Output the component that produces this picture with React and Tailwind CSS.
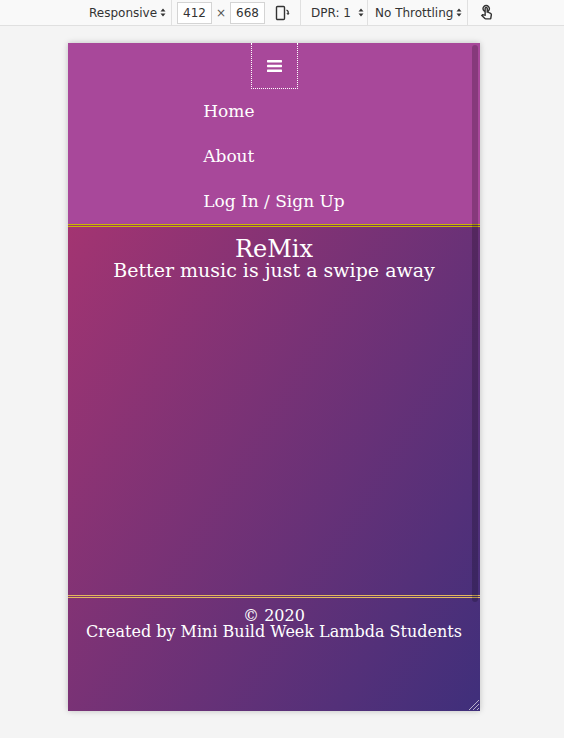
import React from 'react';
import { MdOutlineTouchApp } from 'react-icons/md';

const UpDown = () => (
  <svg width="6" height="9" viewBox="0 0 6 9" className="ml-[3px]">
    <path d="M0.5 3.5 L3 0.5 L5.5 3.5Z M0.5 5.5 L3 8.5 L5.5 5.5Z" fill="#333" />
  </svg>
);

const RotateIcon = () => (
  <svg width="16" height="18" viewBox="0 0 16 18">
    <rect x="1.5" y="2.5" width="8" height="13" rx="1" fill="none" stroke="#333" strokeWidth="1.4" />
    <path d="M11.5 6 Q14 7 13 10" fill="none" stroke="#333" strokeWidth="1.2" />
    <path d="M11.3 9.2 L13 11 L14.6 9.2Z" fill="#333" />
  </svg>
);

const Toolbar = () => (
  <div className="h-[26px] bg-[#f9f9f9] border-b border-[#e0e0e0] flex text-[12px] text-[#333] font-['DejaVu_Sans',sans-serif]">
    <div className="w-[89px]" />
    <div className="w-[83px] flex items-center border-r border-[#e0e0e0]">
      Responsive
      <UpDown />
    </div>
    <div className="w-[129px] flex items-center pl-[5px] border-r border-[#e0e0e0]">
      <span className="w-[35px] h-[22px] bg-white border border-[#d4d4d4] flex items-center justify-center">412</span>
      <span className="w-[18px] text-center text-[#555]">×</span>
      <span className="w-[35px] h-[22px] bg-white border border-[#d4d4d4] flex items-center justify-center">668</span>
      <span className="ml-[10px] flex items-center">
        <RotateIcon />
      </span>
    </div>
    <div className="w-[67px] flex items-center pl-[10px] border-r border-[#e0e0e0]">
      DPR: 1
      <span className="ml-[4px] flex">
        <UpDown />
      </span>
    </div>
    <div className="w-[100px] flex items-center pl-[7px] border-r border-[#e0e0e0]">
      No Throttling
      <UpDown />
    </div>
    <div className="flex items-center pl-[10px]">
      <MdOutlineTouchApp size={17} color="#333" />
    </div>
  </div>
);

const navLinks = ['Home', 'About', 'Log In / Sign Up'];

const App = () => {
  return (
    <div className="min-h-[738px] bg-[#f4f4f4]">
      <Toolbar />
      <div className="ml-[68px] mt-[17px] w-[412px] h-[668px] relative overflow-hidden bg-[linear-gradient(to_bottom_right,#b33570,#3f2f7b)] shadow-[0_0_6px_rgba(0,0,0,0.22)] font-['DejaVu_Serif',serif] text-white">
        <header className="bg-[#a8489a]">
          <div className="flex justify-center">
            <button className="w-[47px] h-[46px] border border-t-0 border-dotted border-white flex items-center justify-center">
              <svg width="15" height="12" viewBox="0 0 15 12">
                <rect x="0" y="0" width="15" height="2.4" rx="0.6" fill="#fff" />
                <rect x="0" y="4.8" width="15" height="2.4" rx="0.6" fill="#fff" />
                <rect x="0" y="9.6" width="15" height="2.4" rx="0.6" fill="#fff" />
              </svg>
            </button>
          </div>
          <ul className="w-fit mx-auto text-[17px] leading-[21px]">
            {navLinks.map((link) => (
              <li key={link} className="py-[12px]">
                {link}
              </li>
            ))}
          </ul>
        </header>

        <main className="h-[371px] [border-top:3px_double_#c9b800] pt-[9px] text-center">
          <h1 className="text-[24px] leading-[27px]">ReMix</h1>
          <p className="text-[19px] leading-[15px]">Better music is just a swipe away</p>
        </main>

        <footer className="[border-top:3px_double_#e3b95c] pt-[10px] text-center text-[16px] leading-[16px]">
          <p>© 2020</p>
          <p>Created by Mini Build Week Lambda Students</p>
        </footer>

        {/* overlay scrollbar + resize grip */}
        <div className="absolute right-[2px] top-[2px] w-[6px] h-[557px] rounded-full bg-black/20" />
        <svg className="absolute right-[1px] bottom-[1px]" width="12" height="12" viewBox="0 0 12 12">
          <path d="M12 2 L2 12 M12 6 L6 12 M12 10 L10 12" stroke="#b8b0cc" strokeWidth="1" />
        </svg>
      </div>
    </div>
  );
};

export default App;
